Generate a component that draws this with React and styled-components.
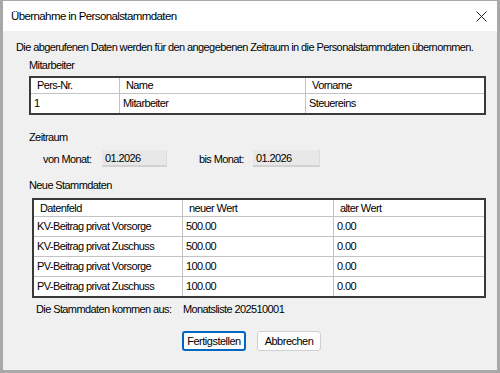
import React from "react";
import styled, { createGlobalStyle } from "styled-components";

const Global = createGlobalStyle`
  html, body { margin: 0; padding: 0; background: #f0f0f0; }
  body { font-family: "Liberation Sans", Arial, sans-serif; font-size: 11px; letter-spacing: -0.6px; color: #000; }
  * { box-sizing: border-box; }
`;

const Window = styled.div`
  width: 500px;
  height: 373px;
  background: #f0f0f0;
  border-left: 3px solid #a8a8a8;
  border-right: 3px solid #a8a8a8;
  border-bottom: 3px solid #a8a8a8;
  border-top: 1px solid #a8a8a8;
  display: flex;
  flex-direction: column;
  overflow: hidden;
`;

const TitleBar = styled.div`
  height: 30px;
  background: #ffffff;
  display: flex;
  align-items: center;
  justify-content: space-between;
  padding: 0 10px 0 8px;
  font-size: 11.5px;
  letter-spacing: -0.6px;
  flex-shrink: 0;
`;

const Body = styled.div`
  padding: 10px 0 0 0;
  display: flex;
  flex-direction: column;
`;

const Line = styled.div`
  line-height: 13px;
  height: 13px;
  white-space: nowrap;
  margin-left: ${p => p.$left}px;
  margin-top: ${p => p.$top || 0}px;
`;

const Grid = styled.div`
  margin-left: ${p => p.$left}px;
  margin-top: ${p => p.$top}px;
  width: ${p => p.$width}px;
  display: grid;
  grid-template-columns: ${p => p.$cols};
  border: 2px solid #3a3a3a;
  background: #fff;
`;

const HeadCell = styled.div`
  height: ${p => p.$h}px;
  line-height: ${p => p.$h - 1}px;
  padding-left: 6px;
  border-bottom: 1px solid #c3c3c3;
  border-right: ${p => (p.$last ? "none" : "1px solid #c3c3c3")};
  white-space: nowrap;
  overflow: hidden;
`;

const Cell = styled.div`
  height: ${p => (p.$lastRow ? 19 : 20)}px;
  line-height: 19px;
  padding-left: 3px;
  border-bottom: ${p => (p.$lastRow ? "none" : "1px solid #c3c3c3")};
  border-right: ${p => (p.$last ? "none" : "1px solid #c3c3c3")};
  white-space: nowrap;
  overflow: hidden;
`;

const PeriodRow = styled.div`
  display: flex;
  align-items: center;
  margin-top: 6px;
  margin-left: 40px;
  height: 17px;
`;

const PeriodLabel = styled.span`
  width: ${p => p.$w}px;
  padding-left: ${p => p.$pad || 0}px;
  white-space: nowrap;
`;

const Field = styled.div`
  width: ${p => p.$w}px;
  height: 17px;
  line-height: 16px;
  background: #e8e8e8;
  border-bottom: 2px solid #d2d2d2;
  border-right: 1px solid #dcdcdc;
  padding-left: 3px;
`;

const SourceRow = styled.div`
  display: flex;
  margin-left: 33px;
  margin-top: 5px;
  line-height: 13px;
`;

const SourceLabel = styled.span`
  width: 147px;
  white-space: nowrap;
`;

const Buttons = styled.div`
  display: flex;
  gap: 11px;
  margin-left: 179px;
  margin-top: 15px;
`;

const Button = styled.button`
  font-family: inherit;
  font-size: 11px;
  letter-spacing: -0.5px;
  width: 64px;
  height: 20px;
  padding: 0;
  background: #fdfdfd;
  color: #000;
  border: ${p => (p.$primary ? "2px solid #0067c0" : "1px solid #d0d0d0")};
  border-radius: 3px;
`;

const Close = () => (
  <svg width="11" height="11" viewBox="0 0 11 11">
    <path d="M0.5 0.5 L10.5 10.5 M10.5 0.5 L0.5 10.5" stroke="#222" strokeWidth="1" fill="none" />
  </svg>
);

const staff = [["1", "Mitarbeiter", "Steuereins"]];
const data = [
  ["KV-Beitrag privat Vorsorge", "500.00", "0.00"],
  ["KV-Beitrag privat Zuschuss", "500.00", "0.00"],
  ["PV-Beitrag privat Vorsorge", "100.00", "0.00"],
  ["PV-Beitrag privat Zuschuss", "100.00", "0.00"],
];

export default function App() {
  return (
    <>
      <Global />
      <Window>
        <TitleBar>
          <span>Übernahme in Personalstammdaten</span>
          <Close />
        </TitleBar>
        <Body>
          <Line $left={13}>
            Die abgerufenen Daten werden für den angegebenen Zeitraum in die Personalstammdaten übernommen.
          </Line>
          <Line $left={26} $top={5}>Mitarbeiter</Line>
          <Grid $left={26} $top={4} $width={457} $cols="89px 186px 1fr">
            {["Pers-Nr.", "Name", "Vorname"].map((h, i) => (
              <HeadCell key={h} $h={16} $last={i === 2}>{h}</HeadCell>
            ))}
            {staff.map((r, ri) =>
              r.map((c, i) => (
                <Cell key={ri + "-" + i} $last={i === 2} $lastRow={ri === staff.length - 1}>{c}</Cell>
              ))
            )}
          </Grid>
          <Line $left={26} $top={16}>Zeitraum</Line>
          <PeriodRow>
            <PeriodLabel $w={59}>von Monat:</PeriodLabel>
            <Field $w={65}>01.2026</Field>
            <PeriodLabel $w={86} $pad={32}>bis Monat:</PeriodLabel>
            <Field $w={67}>01.2026</Field>
          </PeriodRow>
          <Line $left={26} $top={12}>Neue Stammdaten</Line>
          <Grid $left={29} $top={6} $width={454} $cols="149px 151px 1fr">
            {["Datenfeld", "neuer Wert", "alter Wert"].map((h, i) => (
              <HeadCell key={h} $h={17} $last={i === 2}>{h}</HeadCell>
            ))}
            {data.map((r, ri) =>
              r.map((c, i) => (
                <Cell key={ri + "-" + i} $last={i === 2} $lastRow={ri === data.length - 1}>{c}</Cell>
              ))
            )}
          </Grid>
          <SourceRow>
            <SourceLabel>Die Stammdaten kommen aus:</SourceLabel>
            <span>Monatsliste 202510001</span>
          </SourceRow>
          <Buttons>
            <Button $primary>Fertigstellen</Button>
            <Button>Abbrechen</Button>
          </Buttons>
        </Body>
      </Window>
    </>
  );
}
